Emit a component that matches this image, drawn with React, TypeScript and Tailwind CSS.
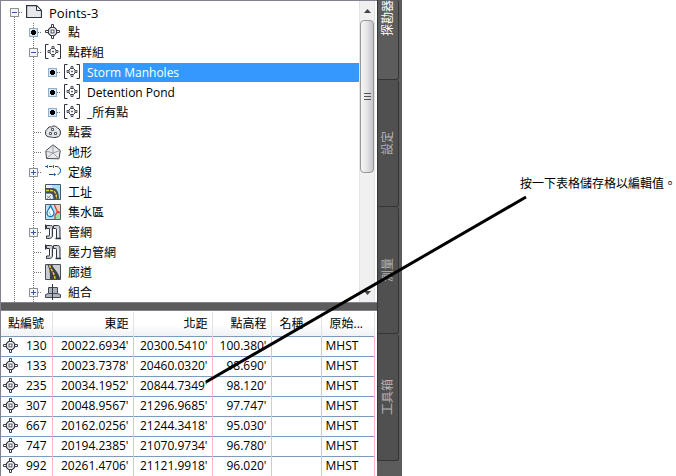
import type { ReactNode } from "react";

const ink = "#2f3540";

function PointIcon() {
  return (
    <svg width="16" height="16" viewBox="0 0 16 16" className="shrink-0" fill="none" stroke="#3a3e4c" aria-hidden="true">
      <path d="M6.500 3.500v-3h2v3M6.500 11.500v3h2v-3M3.500 6.500h-3v2h3M11.500 6.500h3v2h-3" />
      <path d="M5.500 3.500h4l2 2v4l-2 2h-4l-2-2v-4z" strokeWidth="1.200" />
      <rect x="6" y="6" width="3" height="3" strokeWidth=".9" />
    </svg>
  );
}

function GroupIcon() {
  return (
    <svg width="16" height="16" viewBox="0 0 16 16" className="shrink-0" fill="none" stroke="#3a3e4c" aria-hidden="true">
      <path d="M3.500.5h-3v14h3M12.500.5h3v14h-3" stroke={ink} />
      <path d="M7 4.500v-2h2v2M7 10.500v2h2v-2M5 6.500H3v2h2M11 6.500h2v2h-2" strokeWidth=".9" />
      <path d="M6.500 4.500h3l1.500 1.500v3l-1.500 1.500h-3L5 9V6z" />
      <path d="M7.500 7h1v1h-1z" strokeWidth=".7" />
    </svg>
  );
}

function DrawingIcon() {
  return (
    <svg width="16" height="16" viewBox="0 0 16 16" className="shrink-0" aria-hidden="true">
      <path d="M.6 1.600h10l4.900 4.900v7H.6z" fill="#e6e8ec" stroke={ink} strokeWidth="1.200" />
      <path d="M10.500 1.600v4.900h5z" fill="#fff" stroke={ink} />
    </svg>
  );
}

function CloudIcon() {
  return (
    <svg width="16" height="16" viewBox="0 0 16 16" className="shrink-0" fill="#e3e5e8" stroke={ink} aria-hidden="true">
      <path d="M2.500 5C3 3 5 2.500 6.500 3 8 1.300 11.500 2 12.500 4 15 4.500 15.800 7.500 15.300 10c-.6 3-2.800 3-5.300 3.500-2 .5-3-.5-4.500-.5C2 13 .5 11.500 .5 9c0-2 .6-3.300 2-4z" />
      <path d="M6.500 4.500h2v2h-2zM4.500 8.500h2v2h-2zM9.500 8.500h2v2h-2z" fill="#fff" strokeWidth=".8" />
    </svg>
  );
}

function SurfaceIcon() {
  return (
    <svg width="16" height="16" viewBox="0 0 16 16" className="shrink-0" fill="#e6e8eb" aria-hidden="true">
      <path d="M8 .8 15.300 6.500 14 14.800 1.500 14.500.8 6.800z" stroke="#444950" />
      <path d="M8 1v8M8 9 1 7M8 9l7-2.500M8 9l-6 5M8 9l5.500 5.500" stroke="#9ba0a6" />
    </svg>
  );
}

function AlignmentIcon() {
  return (
    <svg width="16" height="16" viewBox="0 0 16 16" className="shrink-0" fill="none" stroke="#344153" aria-hidden="true">
      <path d="M0 2.500h2M4 2.500h3.500M10 2.500h2c2 .5 3.500 2 3.500 4 0 2.500-1.500 3.500-3 4M4 10.500h4" />
      <path d="M2.500 1v3M8.500 1v3M15.500 5v3M9.500 9v3M0 2.500h1M8 10.500h3" stroke="#1979d3" />
    </svg>
  );
}

function SiteIcon() {
  return (
    <svg width="16" height="16" viewBox="0 0 16 16" className="shrink-0" aria-hidden="true">
      <path d="M0 0h16v16H0z" fill="#a9dcf5" />
      <path d="M0 0h7v4H0zM0 10h7v6H0z" fill="#eceeef" />
      <path d="M0 4h7c5 0 7 4 7 11.500H8.500c0-4-1-6-3-6H0z" fill="#454a51" />
      <path d="M1 6.500h5c4 0 5.500 3 5.500 8.500" fill="none" stroke="#f1cf38" strokeWidth="1.400" strokeDasharray="3 1" />
      <path d="M2 12l4 3M6 11l-4 4" stroke="#8d9197" />
      <path d="M.5.5h15v15H.5z" fill="none" stroke="#3c5a72" />
    </svg>
  );
}

function CatchmentIcon() {
  return (
    <svg width="16" height="16" viewBox="0 0 16 16" className="shrink-0" aria-hidden="true">
      <path d="M0 0h16v16H0z" fill="#b9e2f5" />
      <path d="M8 0h8v8h-4z" fill="#f3cdb8" />
      <path d="M11 10h5v6H9z" fill="#98e0a1" />
      <path d="M9.500 1l2.500 6 3 1.500h-3l-2 3V16" fill="none" stroke="#df3d35" strokeWidth="1.300" />
      <path d="M5.500 1.500C4 5.500 2 6.500 2 9a3.500 3.500 0 0 0 7 0c0-2.500-2-3.500-3.500-7.500z" fill="#fff" stroke="#1678b8" strokeWidth="1.300" />
      <path d="M4.500 7.500c-1 2 0 3 1.500 3" fill="none" stroke="#59b4e4" />
      <path d="M.5.5h15v15H.5z" fill="none" stroke="#55606c" />
    </svg>
  );
}

function PipeIcon() {
  return (
    <svg width="16" height="16" viewBox="0 0 16 16" className="shrink-0" fill="#cfd3d8" stroke={ink} aria-hidden="true">
      <path d="M1.500 1.500h4c1.500 0 2 .5 2 2V12c0 2-2 2.500-6 2.500v-2.500h2c.8 0 1-.2 1-1V4.500h-3z" />
      <path d="M.6.500v5" strokeWidth="1.200" />
      <path d="M8.500 1.500h4c2 0 2.500 1 2.500 3v10h-3.500V5.500c0-.8-.3-1-1-1h-2z" />
      <path d="M10.500 14.500H16" strokeWidth="1.500" />
      <path d="M5.500 5v7M13 5v8" stroke="#fff" />
    </svg>
  );
}

function CorridorIcon() {
  return (
    <svg width="16" height="16" viewBox="0 0 16 16" className="shrink-0" aria-hidden="true">
      <path d="M.5.500h15v15H.5z" fill="#c8ced3" />
      <path d="M2 0h5c1 5 7 8 8 15H5C5 9 5 5 2 0z" fill="#3b3e43" />
      <path d="M4.500 1c1.500 5 5 8 5.500 14" fill="none" stroke="#efc52f" strokeWidth="1.500" strokeDasharray="3 1" />
      <path d="M.5.500h15v15H.5z" fill="none" stroke="#454c54" />
    </svg>
  );
}

function AssemblyIcon() {
  return (
    <svg width="16" height="16" viewBox="0 0 16 16" className="shrink-0" fill="#aeb3ba" stroke="#454b56" aria-hidden="true">
      <path d="M3.500 3.500h9v6h-9z" />
      <path d="M.5 13.500v-3l3-1h9l3 1v3z" />
      <path d="M7.500 0v16" stroke={ink} />
    </svg>
  );
}

type Marker = "minus" | "plus" | "dot" | "none";

/* A 19px wide cell of the tree's dotted guide lines, with the expander in it. */
function Guide({ marker, from = 0, line = true }: { marker?: Marker; from?: number; line?: boolean }) {
  return (
    <svg width="19" height="20" viewBox="0 0 19 20" className="shrink-0" shapeRendering="crispEdges" aria-hidden="true">
      {line && <path d={`M9.500 ${from}V20`} stroke="#777" strokeDasharray="1 1" />}
      {marker && <path d="M10 9.500H18" stroke="#777" strokeDasharray="1 1" />}
      {marker && marker !== "none" && (
        <g>
          <rect
            x="5.500"
            y="5.500"
            width="8"
            height="8"
            fill={marker === "dot" ? "#d9e6f2" : "#f3f5f8"}
            stroke={marker === "dot" ? "#8fb0cc" : "#919191"}
          />
          {marker !== "dot" && <path d="M7 9.500h5" stroke="#3a56a5" />}
          {marker === "plus" && <path d="M9.500 7v5" stroke="#3a56a5" />}
          {marker === "dot" && <path d="M8 7h3v1h1v3h-1v1H8v-1H7V8h1z" fill="#000" />}
        </g>
      )}
    </svg>
  );
}

type Item = { label: string; depth: number; marker: Marker; icon: ReactNode; selected?: boolean };

const items: Item[] = [
  { label: "Points-3", depth: 0, marker: "minus", icon: <DrawingIcon /> },
  { label: "點", depth: 1, marker: "dot", icon: <PointIcon /> },
  { label: "點群組", depth: 1, marker: "minus", icon: <GroupIcon /> },
  { label: "Storm Manholes", depth: 2, marker: "dot", icon: <GroupIcon />, selected: true },
  { label: "Detention Pond", depth: 2, marker: "dot", icon: <GroupIcon /> },
  { label: "_所有點", depth: 2, marker: "dot", icon: <GroupIcon /> },
  { label: "點雲", depth: 1, marker: "none", icon: <CloudIcon /> },
  { label: "地形", depth: 1, marker: "none", icon: <SurfaceIcon /> },
  { label: "定線", depth: 1, marker: "plus", icon: <AlignmentIcon /> },
  { label: "工址", depth: 1, marker: "none", icon: <SiteIcon /> },
  { label: "集水區", depth: 1, marker: "none", icon: <CatchmentIcon /> },
  { label: "管網", depth: 1, marker: "plus", icon: <PipeIcon /> },
  { label: "壓力管網", depth: 1, marker: "none", icon: <PipeIcon /> },
  { label: "廊道", depth: 1, marker: "none", icon: <CorridorIcon /> },
  { label: "組合", depth: 1, marker: "plus", icon: <AssemblyIcon /> },
];

function TreeRow({ item }: { item: Item }) {
  return (
    <li role="treeitem" aria-level={item.depth + 1} aria-selected={!!item.selected} className="flex h-5 items-start pl-1">
      {Array.from({ length: item.depth }, (_, i) => (
        <Guide key={i} />
      ))}
      <Guide marker={item.marker} from={item.depth === 0 ? 10 : 0} line={item.depth < 2} />
      <span className="flex w-5 shrink-0 justify-center pt-px">{item.icon}</span>
      <span
        className={`ml-px h-[19px] whitespace-nowrap pl-1 leading-5 ${item.depth === 0 ? "text-[13px]" : ""} ${item.selected ? "grow bg-[#3399ff] text-white" : ""}`}
      >
        {item.label}
      </span>
    </li>
  );
}

const rows = [
  ["130", "20022.6934'", "20300.5410'", "100.380'", "", "MHST"],
  ["133", "20023.7378'", "20460.0320'", "98.690'", "", "MHST"],
  ["235", "20034.1952'", "20844.7349'", "98.120'", "", "MHST"],
  ["307", "20048.9567'", "21296.9685'", "97.747'", "", "MHST"],
  ["667", "20162.0256'", "21244.3418'", "95.030'", "", "MHST"],
  ["747", "20194.2385'", "21070.9734'", "96.780'", "", "MHST"],
  ["992", "20261.4706'", "21121.9918'", "96.020'", "", "MHST"],
];

const headers = ["點編號", "東距", "北距", "點高程", "名稱", "原始..."];
const headerAlign = ["pl-[7px] text-left", "pr-1 text-right", "pr-1 text-right", "pr-1 text-right", "pl-2 text-left", "pl-2 text-left"];
const cellAlign = ["text-left", "pr-1 text-right", "pr-1 text-right", "pr-1 text-right", "", "pl-1 text-left"];

function PointTable() {
  return (
    <table className="w-[373px] table-fixed border-collapse">
      <colgroup>
        <col className="w-[51px]" />
        <col className="w-[81px]" />
        <col className="w-[79px]" />
        <col className="w-[59px]" />
        <col className="w-[50px]" />
        <col className="w-[53px]" />
      </colgroup>
      <thead>
        <tr className="h-6 bg-linear-to-b from-white from-50% to-[#f1f2f4]">
          {headers.map((h, i) => (
            <th key={h} scope="col" className={`border-r border-[#e0e2e6] p-0 font-normal whitespace-nowrap ${headerAlign[i]}`}>
              {h}
            </th>
          ))}
        </tr>
      </thead>
      <tbody>
        {rows.map((r) => (
          <tr key={r[0]} className="h-5 border-t border-[#7a9cc0]">
            {r.map((c, i) => (
              <td key={i} className={`border-r border-r-[#ffb9b9] p-0 leading-4 ${cellAlign[i]}`}>
                {i === 0 ? (
                  <span className="flex items-center gap-[7px] pl-0.5">
                    <PointIcon />
                    {c}
                  </span>
                ) : (
                  c
                )}
              </td>
            ))}
          </tr>
        ))}
      </tbody>
    </table>
  );
}

function Scrollbar() {
  return (
    <div className="flex w-4 shrink-0 flex-col border-x border-[#e3e3e3] bg-[#f0f0f0]">
      <button type="button" aria-label="Scroll up" className="flex h-[19px] items-center justify-center">
        <svg width="7" height="4" viewBox="0 0 7 4"><path d="M3.500 0 7 4H0z" fill="#444" /></svg>
      </button>
      <button
        type="button"
        aria-label="Scroll position"
        className="flex h-[153px] items-center justify-center rounded-sm border border-[#979797] bg-linear-to-r from-[#f6f6f6] via-[#e4e4e7] to-[#c4c4c9]"
      >
        <svg width="7" height="8" viewBox="0 0 7 8" shapeRendering="crispEdges"><path d="M0 .5h7M0 3.500h7M0 6.500h7" stroke="#555" /></svg>
      </button>
      <button type="button" aria-label="Scroll down" className="mt-auto flex h-[18px] items-center justify-center">
        <svg width="7" height="4" viewBox="0 0 7 4"><path d="M0 0h7L3.500 4z" fill="#444" /></svg>
      </button>
    </div>
  );
}

const tabs = [
  { label: "探勘器", size: "h-20 justify-start bg-[#5c5c5c] pb-[43px] text-white", active: true },
  { label: "設定", size: "h-[127px] justify-center bg-[#505050] text-[#b4b4b4]" },
  { label: "測量", size: "h-[127px] justify-center bg-[#505050] text-[#b4b4b4]" },
  { label: "工具箱", size: "h-[127px] justify-center bg-[#505050] text-[#b4b4b4]" },
];

function SideTabs() {
  return (
    <div role="tablist" aria-orientation="vertical" className="flex w-[25px] shrink-0 flex-col bg-[#5c5c5c] pr-[3px]">
      {tabs.map((t) => (
        <button
          key={t.label}
          type="button"
          role="tab"
          aria-selected={!!t.active}
          className={`flex shrink-0 items-center rounded-r-[3px] border border-t-0 border-[#353535] whitespace-nowrap [writing-mode:sideways-lr] ${t.size}`}
        >
          {t.label}
        </button>
      ))}
    </div>
  );
}

export default function App() {
  return (
    <main className="relative flex h-screen overflow-hidden bg-white font-['Open_Sans','Noto_Sans_CJK_TC',sans-serif] text-xs text-black">
      <div className="flex w-[377px] shrink-0 flex-col border-l border-[#82828f] bg-white">
        <section className="flex h-[303px] shrink-0 border-y border-[#82828f]">
          <ul role="tree" className="min-w-0 grow overflow-hidden pt-0.5">
            {items.map((it) => (
              <TreeRow key={it.label} item={it} />
            ))}
          </ul>
          <Scrollbar />
          <div className="w-0.5 shrink-0" />
        </section>
        <div className="h-[7px] shrink-0 bg-[#5c5c5c]" />
        <section className="min-h-0 grow overflow-hidden border-t border-[#82828f] pt-px">
          <PointTable />
        </section>
      </div>
      <SideTabs />
      <p className="mt-44 ml-[118px] whitespace-nowrap font-['Liberation_Serif','Noto_Sans_CJK_TC',serif] leading-4">
        按一下表格儲存格以編輯值。
      </p>
      <svg className="pointer-events-none absolute top-0 left-0" width="676" height="476" aria-hidden="true">
        <path d="M206 382 526 197" stroke="#000" strokeWidth="3" />
      </svg>
    </main>
  );
}
